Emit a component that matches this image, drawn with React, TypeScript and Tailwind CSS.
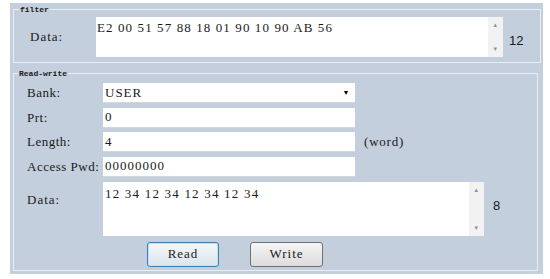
import { ReactNode } from "react";

function Scrollbar() {
  return (
    <div className="flex h-full w-[15px] flex-col items-center justify-between bg-[#f2f2f2] py-[5px] font-['Liberation_Sans'] text-[6px] leading-none text-[#8a95a0]">
      <span>▲</span>
      <span>▼</span>
    </div>
  );
}

function Field({ label, children, extra }: { label: string; children: ReactNode; extra?: ReactNode }) {
  return (
    <div className="flex items-center">
      <span className="w-[89px] whitespace-nowrap pl-[13px]">{label}</span>
      {children}
      {extra}
    </div>
  );
}

function TextBox({ value, select }: { value: string; select?: boolean }) {
  return (
    <div className="flex h-[20px] w-[252px] items-center justify-between border-b border-[#d3d8de] bg-white pl-[2px] pr-[5px]">
      <span className="tracking-[1px]">{value}</span>
      {select && <span className="font-['Liberation_Sans'] text-[7px] leading-none text-black">▼</span>}
    </div>
  );
}

export default function App() {
  return (
    <div className="h-[279px] w-[550px] bg-white pl-[10px] pt-[3px] font-['Liberation_Serif',serif] text-[13px] tracking-[0.5px] text-[#1a1a1a]">
      <div className="h-[271px] w-[533px] bg-[#c3cfdc] pl-[3px] pt-[1px]">
        {/* filter group */}
        <fieldset className="h-[59px] w-[528px] border border-[#e9eef4]">
          <legend className="ml-[5px] px-[1px] font-['Liberation_Mono'] text-[8px] font-bold leading-[11px] tracking-normal">filter</legend>
          <div className="mt-[2px] flex items-center">
            <span className="w-[82px] pl-[16px] tracking-[1px]">Data:</span>
            <div className="flex h-[40px] w-[407px] bg-white">
              <div className="flex-1 pl-[1px] pt-[1px] tracking-[1.1px]">E2 00 51 57 88 18 01 90 10 90 AB 56</div>
              <Scrollbar />
            </div>
            <span className="ml-[6px] mt-[8px] font-['Liberation_Sans'] text-[13px] tracking-normal">12</span>
          </div>
        </fieldset>

        {/* read-write group */}
        <fieldset className="mt-[5px] h-[203px] w-[525px] border border-[#e9eef4]">
          <legend className="ml-[4px] px-[1px] font-['Liberation_Mono'] text-[8px] font-bold leading-[11px] tracking-normal">Read-write</legend>
          <div className="mt-[4px] flex flex-col gap-[4.5px]">
            <Field label="Bank:">
              <TextBox value="USER" select />
            </Field>
            <Field label="Prt:">
              <TextBox value="0" />
            </Field>
            <Field label="Length:" extra={<span className="ml-[9px] tracking-[0.8px]">(word)</span>}>
              <TextBox value="4" />
            </Field>
            <Field label="Access Pwd:">
              <TextBox value="00000000" />
            </Field>
          </div>
          <div className="mt-[5px] flex items-start">
            <span className="mt-[8px] w-[89px] pl-[13px] tracking-[1px]">Data:</span>
            <div className="flex h-[54px] w-[381px] bg-white">
              <div className="flex-1 pl-[2px] pt-[2px] tracking-[1.2px]">12 34 12 34 12 34 12 34</div>
              <Scrollbar />
            </div>
            <span className="ml-[9px] mt-[14px] font-['Liberation_Sans'] text-[13px] tracking-normal">8</span>
          </div>
          <div className="ml-[133px] mt-[6px] flex gap-[31px]">
            <button className="h-[25px] w-[72px] rounded-[3px] border border-[#3c7fb1] bg-gradient-to-b from-[#f4f8fb] to-[#dbe4ec] tracking-[1px] shadow-[inset_0_0_0_1px_#bfe3f7]">
              Read
            </button>
            <button className="h-[25px] w-[73px] rounded-[3px] border border-[#707070] bg-gradient-to-b from-[#f5f5f5] to-[#dcdcdc] tracking-[1px]">
              Write
            </button>
          </div>
        </fieldset>
      </div>
    </div>
  );
}
